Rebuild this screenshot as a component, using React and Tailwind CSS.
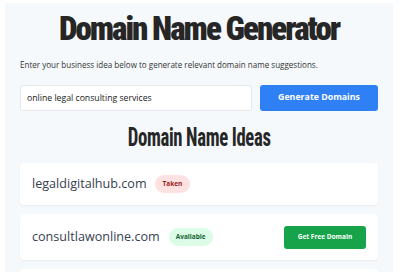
const domains = [
  { name: 'legaldigitalhub.com', available: false },
  { name: 'consultlawonline.com', available: true },
  { name: 'lawadvicehub.com', available: true },
];

const App = () => (
  <div className="min-h-screen bg-white pt-[3px] font-['Open_Sans',sans-serif] text-[#1f2937]">
    <div className="ml-[5px] w-[388px] bg-[#f6f9fc] px-[15px] pt-[6px] pb-6">
      <h1 className="text-center font-['Roboto_Condensed',sans-serif] font-black text-[33px] leading-[40px] text-[#262626] tracking-[-2px]">
        Domain Name Generator
      </h1>
      <p className="mt-[9px] text-[8.05px] leading-[14px] text-[#333]">
        Enter your business idea below to generate relevant domain name suggestions.
      </p>
      <div className="mt-[13px] flex gap-2">
        <input
          defaultValue="online legal consulting services"
          className="flex-1 h-[26px] px-[6px] bg-white border border-[#e5e7eb] rounded-[3px] text-[8.7px] text-[#222] outline-none"
        />
        <button className="w-[118px] h-[26px] bg-[#2f80f5] rounded-[3px] text-white font-bold text-[8.8px]">
          Generate Domains
        </button>
      </div>
      <h2 className="mt-[10px] flex justify-center text-[#262626]">
        <span className="inline-block origin-center scale-x-[0.72] font-['Roboto_Condensed',sans-serif] font-bold text-[26px] leading-[32px] tracking-[-0.5px] whitespace-nowrap">
          Domain Name Ideas
        </span>
      </h2>
      <div className="mt-[10px] flex flex-col gap-[9px]">
        {domains.map((d) => (
          <div
            key={d.name}
            className={`bg-white rounded-[4px] shadow-[0_1px_2px_rgba(0,0,0,0.06)] px-3 flex items-center ${d.available ? 'h-[46px]' : 'h-[42px]'}`}
          >
            <span className="text-[12.6px] text-[#374151]">{d.name}</span>
            {d.available ? (
              <span className="ml-[9px] px-[7px] h-[18px] flex items-center rounded-full bg-[#dcfce7] text-[#166534] text-[6.5px] font-bold">
                Available
              </span>
            ) : (
              <span className="ml-[8px] px-[8px] h-[18px] flex items-center rounded-full bg-[#fee2e2] text-[#991b1b] text-[6.5px] font-bold">
                Taken
              </span>
            )}
            {d.available && (
              <button className="ml-auto w-[82px] h-[23px] bg-[#16a34a] rounded-[3px] text-white font-bold text-[6.5px]">
                Get Free Domain
              </button>
            )}
          </div>
        ))}
      </div>
    </div>
  </div>
);

export default App;
